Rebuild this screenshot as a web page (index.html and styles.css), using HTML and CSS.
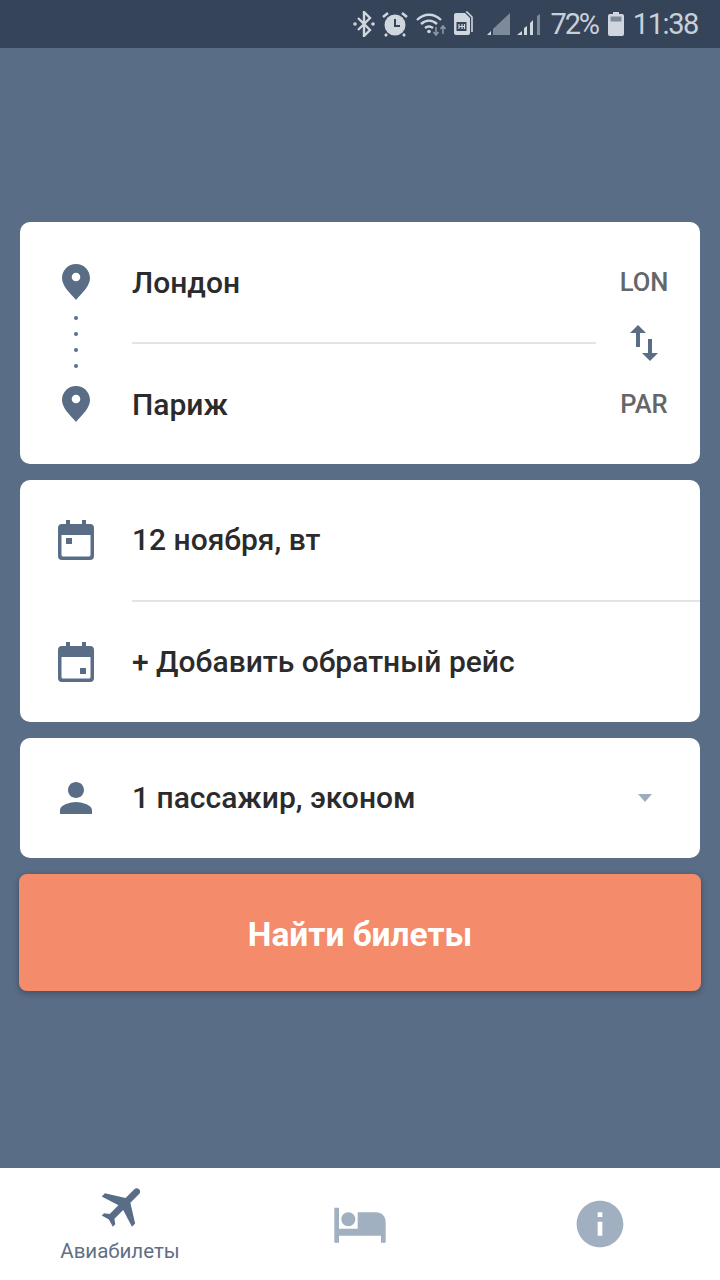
FILE: index.html
```html
<!DOCTYPE html>
<html lang="ru">
<head>
  <meta charset="UTF-8">
  <meta name="viewport" content="width=device-width, initial-scale=1.0">
  <title>Авиабилеты</title>
  <link rel="stylesheet" href="styles.css">
</head>
<body>
  <div class="status">
    <!-- bluetooth -->
    <svg class="st-bt" width="22" height="26" viewBox="0 0 22 26"><path d="M5 7l12 12-6 6V1l6 6L5 19" fill="none" stroke="#d0d6de" stroke-width="2.4"/><circle cx="2" cy="13" r="1.8" fill="#d0d6de"/><circle cx="20" cy="13" r="1.8" fill="#d0d6de"/></svg>
    <!-- alarm -->
    <svg class="st-alarm" width="26" height="26" viewBox="0 0 26 26"><circle cx="13" cy="14" r="10.5" fill="#d0d6de"/><path d="M13 8v7h5" fill="none" stroke="#36445a" stroke-width="2"/><path d="M1 6l5-4M25 6l-5-4M5 23l-2 2M21 23l2 2" stroke="#d0d6de" stroke-width="2.6"/></svg>
    <!-- wifi -->
    <svg class="st-wifi" width="31" height="26" viewBox="0 0 31 26"><path d="M1 9c7-7 17-7 24 0M5 13c5-4.500 11-4.500 16 0M9 17c2.500-2 5.500-2 8 0" fill="none" stroke="#d0d6de" stroke-width="2.400"/><circle cx="13" cy="20.500" r="1.800" fill="#d0d6de"/><path d="M20 16v7M17.500 21l2.500 3 2.500-3" fill="none" stroke="#8d99a8" stroke-width="1.500"/><path d="M27 23v-8M24.500 18l2.500-3 2.500 3" fill="none" stroke="#8d99a8" stroke-width="1.500"/></svg>
    <!-- sim -->
    <svg class="st-sim" width="22" height="26" viewBox="0 0 22 26"><path d="M5 2h9l5 5v15a2 2 0 0 1-2 2H5a2 2 0 0 1-2-2V4a2 2 0 0 1 2-2z" fill="#d0d6de"/><path d="M15 1h1l5 5v15" fill="none" stroke="#d0d6de" stroke-width="1.600"/><rect x="5.500" y="11" width="10" height="9" fill="#36445a"/><path d="M8 13v5M11 13v5M13.500 13v5M8 15.500h6" stroke="#d0d6de" stroke-width="1.200"/></svg>
    <!-- signal 1 -->
    <svg class="st-sig1" width="24" height="26" viewBox="0 0 24 26"><path d="M24 2v22H7v-6z" fill="#7d8a9b"/><path d="M5 20v4H1z" fill="#d0d6de"/></svg>
    <!-- signal 2 -->
    <svg class="st-sig2" width="24" height="26" viewBox="0 0 24 26"><path d="M0 24l5-4v4z" fill="#d0d6de"/><path d="M7 24v-7l3-2v9zM13 24V12l3-3v15z" fill="#d0d6de"/><path d="M20 24V5l3-2v21z" fill="#7d8a9b"/></svg>
    <span class="st-pct">72%</span>
    <!-- battery -->
    <svg class="st-batt" width="16" height="24" viewBox="0 0 16 24"><path d="M5 0h6v2h3a2 2 0 0 1 2 2v18a2 2 0 0 1-2 2H2a2 2 0 0 1-2-2V4a2 2 0 0 1 2-2h3z" fill="#d0d6de"/><rect x="2.500" y="4.500" width="11" height="5" fill="#7d8a9b"/></svg>
    <span class="st-time">11:38</span>
  </div>

  <div class="main">
    <div class="card route">
      <div class="route-icons">
        <svg class="pin" width="28" height="36" viewBox="0 0 28 36"><path fill-rule="evenodd" d="M14 0C6.300 0 0 6.200 0 14c0 8 8 15 14 22 6-7 14-14 14-22C28 6.200 21.700 0 14 0zm0 8.700a4.300 4.300 0 1 1 0 8.600 4.300 4.300 0 0 1 0-8.600z"/></svg>
        <div class="dots"><span></span><span></span><span></span><span></span></div>
        <svg class="pin" width="28" height="36" viewBox="0 0 28 36"><path fill-rule="evenodd" d="M14 0C6.300 0 0 6.200 0 14c0 8 8 15 14 22 6-7 14-14 14-22C28 6.200 21.700 0 14 0zm0 8.700a4.300 4.300 0 1 1 0 8.600 4.300 4.300 0 0 1 0-8.600z"/></svg>
      </div>
      <div class="route-fields">
        <div class="row-text">Лондон</div>
        <div class="line"></div>
        <div class="row-text">Париж</div>
      </div>
      <div class="codes">
        <span class="code">LON</span>
        <svg class="icon" width="48" height="48" viewBox="0 0 24 24"><path d="M16 17.010V10h-2v7.010h-3L15 21l4-3.990h-3zM9 3L5 6.990h3V14h2V6.990h3L9 3z"/></svg>
        <span class="code">PAR</span>
      </div>
    </div>

    <div class="card">
      <div class="row">
        <div class="row-icon">
          <svg class="icon" width="36" height="40" viewBox="0 0 36 40"><path fill-rule="evenodd" d="M8 0h4v4h12V0h4v4h4a4 4 0 0 1 4 4v28a4 4 0 0 1-4 4H4a4 4 0 0 1-4-4V8a4 4 0 0 1 4-4h4zM3.500 15v20a1.500 1.500 0 0 0 1.500 1.500h26a1.500 1.500 0 0 0 1.500-1.500V15zM8 18h6v6H8z"/></svg>
        </div>
        <div class="row-text">12 ноября, вт</div>
      </div>
      <div class="line line-long"></div>
      <div class="row">
        <div class="row-icon">
          <svg class="icon" width="36" height="40" viewBox="0 0 36 40"><path fill-rule="evenodd" d="M8 0h4v4h12V0h4v4h4a4 4 0 0 1 4 4v28a4 4 0 0 1-4 4H4a4 4 0 0 1-4-4V8a4 4 0 0 1 4-4h4zM3.500 15v20a1.500 1.500 0 0 0 1.500 1.500h26a1.500 1.500 0 0 0 1.500-1.500V15zM22 26h6v6h-6z"/></svg>
        </div>
        <div class="row-text">+ Добавить обратный рейс</div>
      </div>
    </div>

    <div class="card">
      <div class="row">
        <div class="row-icon">
          <svg class="icon" width="48" height="48" viewBox="0 0 24 24"><path d="M12 12c2.210 0 4-1.790 4-4s-1.790-4-4-4-4 1.790-4 4 1.790 4 4 4zm0 2c-2.670 0-8 1.340-8 4v2h16v-2c0-2.660-5.330-4-8-4z"/></svg>
        </div>
        <div class="row-text grow">1 пассажир, эконом</div>
        <div class="caret"></div>
      </div>
    </div>

    <a href="javascript:;" class="btn">Найти билеты</a>
  </div>

  <div class="tabs">
    <div class="tab active">
      <svg class="plane" width="54" height="54" viewBox="0 0 24 24"><path d="M21 16v-2l-8-5V3.500c0-.830-.670-1.500-1.500-1.500S10 2.670 10 3.500V9l-8 5v2l8-2.500V19l-2 1.500V22l3.500-1 3.500 1v-1.500L13 19v-5.500l8 2.500z"/></svg>
      <span class="tab-label">Авиабилеты</span>
    </div>
    <div class="tab">
      <svg class="tab-icon" width="56" height="56" viewBox="0 0 24 24"><path d="M7 13c1.660 0 3-1.340 3-3S8.660 7 7 7s-3 1.340-3 3 1.340 3 3 3zm12-6h-8v7H3V5H1v15h2v-3h18v3h2v-9c0-2.210-1.790-4-4-4z"/></svg>
    </div>
    <div class="tab">
      <svg class="tab-icon" width="56" height="56" viewBox="0 0 24 24"><path d="M12 2C6.480 2 2 6.480 2 12s4.480 10 10 10 10-4.480 10-10S17.520 2 12 2zm1 15h-2v-6h2v6zm0-8h-2V7h2v2z"/></svg>
    </div>
  </div>
</body>
</html>
```

FILE: styles.css
```css
*{
  margin:0;
  padding:0;
  box-sizing:border-box;
}
body{
  width:720px;
  height:1280px;
  background:#5a6d86;
  font-family:Roboto,"Noto Sans",sans-serif;
  overflow:hidden;
  display:flex;
  flex-direction:column;
}
svg{
  display:block;
  flex:none;
}

/* status bar */
.status{
  height:48px;
  background:#36445a;
  display:flex;
  align-items:center;
  justify-content:flex-end;
  padding-right:22px;
  color:#c9d0d9;
  font-size:29px;
}
.st-bt{margin-right:7px;}
.st-alarm{margin-right:8px;}
.st-wifi{margin-right:4px;}
.st-sim{margin-right:13px;}
.st-sig1{margin-right:7px;}
.st-sig2{margin-right:10px;}
.st-pct{letter-spacing:-2.200px;margin-right:10px;}
.st-batt{margin-right:9px;}
.st-time{letter-spacing:-1.400px;}

/* main */
.main{
  flex:1;
  padding:174px 20px 0;
  display:flex;
  flex-direction:column;
  gap:16px;
}
.card{
  background:#fff;
  border-radius:10px;
}
.route{
  display:flex;
  height:242px;
}
.route-icons{
  width:112px;
  padding-top:42px;
  display:flex;
  flex-direction:column;
  align-items:center;
}
.pin,.icon,.plane{
  fill:#5a6d86;
}
.dots{
  display:flex;
  flex-direction:column;
  gap:12px;
  margin:16px 0 18px;
}
.dots>span{
  width:4px;
  height:4px;
  border-radius:50%;
  background:#5a6d96;
}
.route-fields{
  width:464px;
}
.route-fields .row-text{
  height:120px;
  line-height:122px;
}
.line{
  height:2px;
  background:#e2e3e5;
}
.line-long{
  margin-left:112px;
}
.row-text{
  font-size:30px;
  line-height:36px;
  font-weight:500;
  color:#2b2b2d;
}
.grow{
  flex:1;
}
.codes{
  width:96px;
  display:flex;
  flex-direction:column;
  align-items:center;
  justify-content:center;
  gap:21px;
}
.code{
  font-size:25.500px;
  font-weight:500;
  line-height:32px;
  color:#646668;
}
.row{
  height:120px;
  display:flex;
  align-items:center;
}
.row-icon{
  width:112px;
  display:flex;
  justify-content:center;
}
.caret{
  width:0;
  height:0;
  border-left:7px solid transparent;
  border-right:7px solid transparent;
  border-top:8px solid #9dadbf;
  margin-right:48px;
}
.btn{
  display:block;
  height:117px;
  margin:0 -1px;
  background:#f48b6b;
  border-radius:8px;
  box-shadow:0 2px 6px rgba(0,0,0,.3);
  color:#fff;
  font-size:33.500px;
  font-weight:700;
  line-height:122px;
  text-align:center;
  text-decoration:none;
}

/* bottom tabs */
.tabs{
  height:112px;
  background:#fff;
  display:grid;
  grid-template-columns:repeat(3,1fr);
}
.tab{
  display:flex;
  flex-direction:column;
  align-items:center;
  justify-content:center;
}
.tab.active{
  justify-content:flex-start;
  padding-top:13px;
}
.tab-icon{
  fill:#a0b0c0;
}
.plane{
  transform:translate(4px,-2px) rotate(45deg);
}
.tab-label{
  font-size:20.500px;
  line-height:24px;
  margin-top:4px;
  color:#5f6f85;
}
```
